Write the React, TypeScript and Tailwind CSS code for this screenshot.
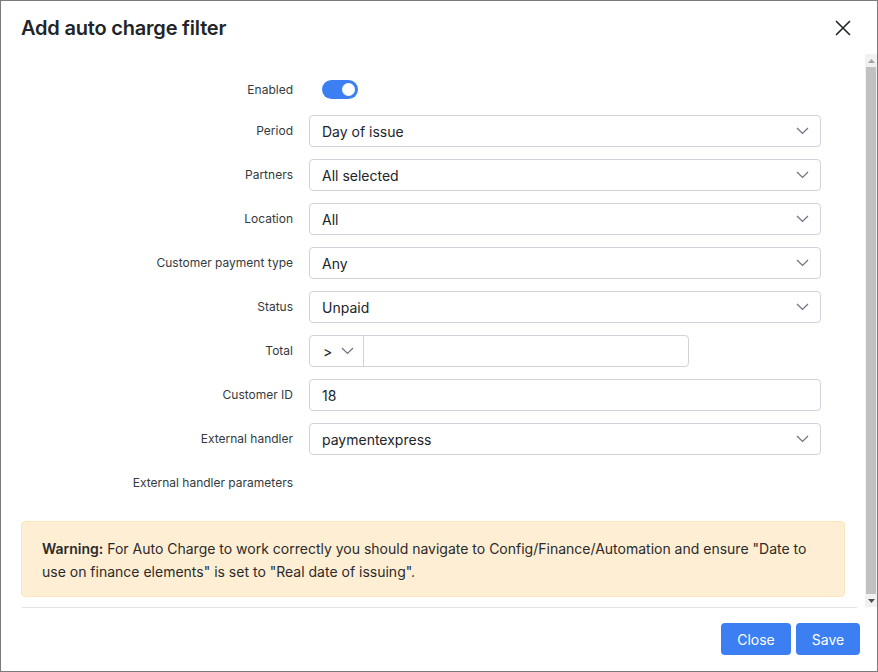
import * as React from "react"

const Chevron = ({ className = "" }: { className?: string }) => (
  <svg width="13" height="8" viewBox="0 0 13 8" className={className}>
    <path d="M1 1l5.5 5.5L12 1" fill="none" stroke="#6b7280" strokeWidth="1.2" />
  </svg>
)

function Row({ label, children, h = "h-8" }: { label: string; children?: React.ReactNode; h?: string }) {
  return (
    <div className={`flex items-center ${h} mb-3`}>
      <div className="w-[272px] shrink-0 text-right text-[12px] text-[#343a40]">{label}</div>
      <div className="ml-4 flex items-center">{children}</div>
    </div>
  )
}

function Select({ value }: { value: string }) {
  return (
    <div className="flex h-8 w-[512px] items-center justify-between rounded-[4px] border border-[#ced4da] pl-3 pr-[11px] text-[14px] text-[#212529]">
      <span>{value}</span>
      <Chevron />
    </div>
  )
}

export default function App() {
  return (
    <div className="flex h-[672px] w-[878px] flex-col border border-[#7a7a7a] bg-white font-['Inter',sans-serif]">
      {/* header */}
      <div className="flex h-[53px] shrink-0 items-center justify-between pl-[20px] pr-[26px]">
        <h1 className="text-[20px] font-semibold tracking-[-0.2px] text-[#212529]">Add auto charge filter</h1>
        <svg width="16" height="16" viewBox="0 0 16 16">
          <path d="M1 1l14 14M15 1L1 15" stroke="#212529" strokeWidth="1.6" />
        </svg>
      </div>

      {/* body */}
      <div className="flex h-[553px] shrink-0">
        <div className="flex-1 px-[20px] pt-[22px]">
          <Row label="Enabled" h="h-[27px]">
            <div className="ml-[13px] flex h-[19px] w-9 items-center justify-end rounded-full bg-[#3b7ff2] pr-[3px]">
              <div className="h-[13px] w-[13px] rounded-full bg-white" />
            </div>
          </Row>
          <Row label="Period"><Select value="Day of issue" /></Row>
          <Row label="Partners"><Select value="All selected" /></Row>
          <Row label="Location"><Select value="All" /></Row>
          <Row label="Customer payment type"><Select value="Any" /></Row>
          <Row label="Status"><Select value="Unpaid" /></Row>
          <Row label="Total">
            <div className="flex h-8 w-[380px] rounded-[4px] border border-[#ced4da] text-[14px] text-[#212529]">
              <div className="flex w-[54px] items-center gap-[9px] border-r border-[#ced4da] pl-[13px]">
                <span>&gt;</span>
                <Chevron />
              </div>
              <div className="flex-1" />
            </div>
          </Row>
          <Row label="Customer ID">
            <div className="flex h-8 w-[512px] items-center rounded-[4px] border border-[#ced4da] pl-3 text-[14px] text-[#212529]">18</div>
          </Row>
          <Row label="External handler"><Select value="paymentexpress" /></Row>
          <Row label="External handler parameters" />

          <div className="mt-[22px] rounded-[4px] border border-[#fde6bd] bg-[#feeed3] px-5 pb-[13px] pt-[15px] text-[14px] leading-[23px] text-[#2b2b2b]">
            <p>
              <strong className="font-semibold">Warning:</strong>{" "}
              For Auto Charge to work correctly you should navigate to Config/Finance/Automation and ensure "Date to use on finance elements" is set to "Real date of issuing".
            </p>
          </div>
        </div>

        {/* scrollbar */}
        <div className="flex w-3 shrink-0 flex-col bg-[#f1f1f1]">
          <div className="flex h-[13px] items-center justify-center">
            <svg width="7" height="4" viewBox="0 0 7 4"><path d="M0 4L3.5 0L7 4z" fill="#a3a3a3" /></svg>
          </div>
          <div className="mx-[1px] flex-1 bg-[#c1c1c1]" />
          <div className="flex h-[13px] items-center justify-center">
            <svg width="7" height="4" viewBox="0 0 7 4"><path d="M0 0L3.5 4L7 0z" fill="#505050" /></svg>
          </div>
        </div>
      </div>

      {/* footer */}
      <div className="ml-[21px] mr-[20px] border-t border-[#e5e5e5]" />
      <div className="flex flex-1 items-start justify-end gap-[5px] pr-[17px] pt-[15px]">
        <button className="h-8 w-[70px] rounded-[4px] bg-[#3b7ff2] text-[14px] text-white">Close</button>
        <button className="h-8 w-16 rounded-[4px] bg-[#3b7ff2] text-[14px] text-white">Save</button>
      </div>
    </div>
  )
}
